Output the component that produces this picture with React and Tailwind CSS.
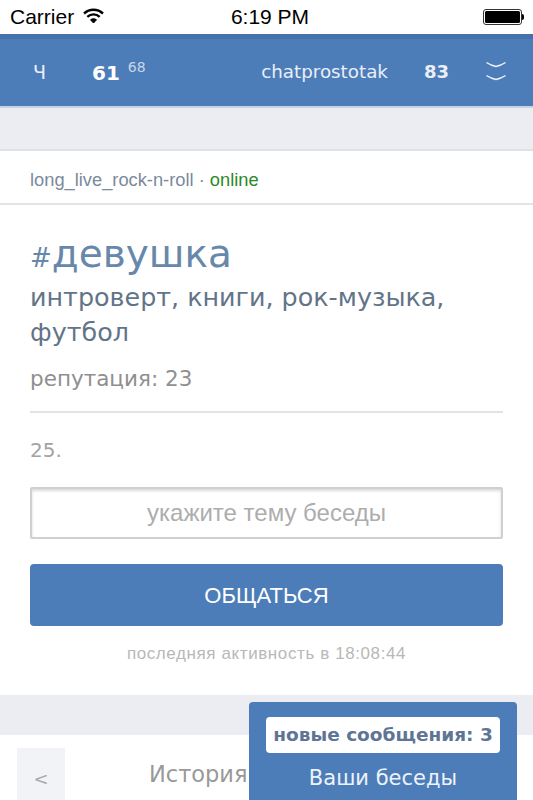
const dejavu = "font-['DejaVu_Sans',sans-serif]";
const arial = "font-['Liberation_Sans',sans-serif]";

function StatusBar() {
  return (
    <div className={`flex h-[34px] items-center justify-between pl-[10px] pr-[9px] bg-white text-black ${arial}`}>
      <div className="flex w-[203px] items-center gap-[9px] text-[21px]">
        <span>Carrier</span>
        <svg width="21" height="16" viewBox="0 0 21 16" fill="none" className="-mt-[2px]">
          <path d="M1 5.5C6.5 0.5 14.5 0.5 20 5.5" stroke="#000" strokeWidth="2.4" />
          <path d="M4.3 8.8C7.8 5.6 13.2 5.6 16.7 8.8" stroke="#000" strokeWidth="2.4" />
          <path d="M7.5 11.8C9.2 10.4 11.8 10.4 13.5 11.8L10.5 15Z" fill="#000" stroke="#000" />
        </svg>
      </div>
      <span className="text-[21px] font-medium">6:19 PM</span>
      <div className="flex w-[197px] justify-end items-center">
        <div className="h-[16px] w-[39px] rounded-[3px] border border-[#333] bg-white p-[1px]">
          <div className="h-full w-full rounded-[1.5px] bg-black" />
        </div>
        <div className="h-[6px] w-[2px] bg-black rounded-r-sm" />
      </div>
    </div>
  );
}

function Header() {
  return (
    <div className={`flex h-[74px] items-center border-t-[5px] border-[#4672ab] border-b-2 border-b-[#c6d3e5] bg-[#4d7db9] text-[#e9eff7] ${dejavu}`}>
      <span className="ml-[33px] w-[59px] text-[19px]">Ч</span>
      <span className="text-[20px] font-bold text-white">61</span>
      <span className="ml-[8px] -mt-[10px] text-[14px] text-[#c7d6e9]">68</span>
      <span className="ml-auto -mt-[2px] text-[18.3px]">chatprostotak</span>
      <span className="ml-[36px] -mt-[2px] text-[18px] font-bold">83</span>
      <svg width="20" height="22" viewBox="0 0 20 22" fill="none" stroke="#f2f5fa" strokeWidth="1.4" className="ml-[37px] mr-[27px] -mt-[2px]">
        <path d="M0.5 1.5Q5 4.5 10 5.5Q15 4.5 19.5 1.5" />
        <path d="M0.5 14.5Q5 17.5 10 18.5Q15 17.5 19.5 14.5" />
      </svg>
    </div>
  );
}

function Card() {
  return (
    <div className="border-t-2 border-[#dfe1e6] bg-white">
      <div className={`flex h-[54px] items-center border-b-2 border-[#e3e4e6] pl-[30px] pt-[5px] text-[18.3px] text-[#7b8a9c] ${arial}`}>
        long_live_rock-n-roll ·&nbsp;<span className="text-[#2a8a2a]">online</span>
      </div>
      <div className={`px-[30px] pt-[25px] ${dejavu}`}>
        <div className="text-[39px] leading-[48px] text-[#6787ab]">
          <span className="text-[26px] leading-none">#</span>девушка
        </div>
        <div className="mt-[2px] text-[25.4px] leading-[35px] text-[#627488]">интроверт, книги, рок-музыка, футбол</div>
        <div className="mt-[15px] text-[21.5px] leading-[28px] text-[#8f8f8f]">репутация: 23</div>
        <div className="mt-[18px] h-[2px] bg-[#e3e3e3]" />
        <div className="mt-[24px] text-[20px] leading-[26px] text-[#a3a3a3]">25.</div>
        <div className={`mt-[24px] flex h-[52px] items-center justify-center rounded-[2px] border-2 border-[#d0d0d0] shadow-[inset_0_2px_3px_rgba(0,0,0,0.15)] text-[24px] text-[#adadad] ${arial}`}>
          укажите тему беседы
        </div>
        <button className={`mt-[25px] flex h-[62px] w-full items-center justify-center rounded-[4px] bg-[#4d7db9] text-[22px] text-white ${arial}`}>
          ОБЩАТЬСЯ
        </button>
        <div className={`mt-[17px] pb-[30px] text-center text-[17px] leading-[22px] tracking-[0.6px] text-[#b8b8b8] ${arial}`}>
          последняя активность в 18:08:44
        </div>
      </div>
    </div>
  );
}

function Footer() {
  return (
    <div className={`flex h-[65px] items-start bg-white pl-[17px] pt-[13px] ${dejavu}`}>
      <div className="flex h-[52px] w-[48px] items-center justify-center bg-[#f2f3f6] pt-[8px] text-[18px] text-[#aaa]">&lt;</div>
      <span className="ml-[84px] mt-[10px] text-[22.5px] text-[#999]">История</span>
    </div>
  );
}

export default function App() {
  return (
    <div className="relative h-[800px] w-[533px] overflow-hidden bg-[#ecedf3]">
      <StatusBar />
      <Header />
      <div className="h-[41px]" />
      <Card />
      <div className="h-[40px]" />
      <Footer />
      <div className={`absolute left-[249px] top-[702px] h-[98px] w-[268px] rounded-t-[4px] bg-[#4d7db9] px-[17px] pt-[15px] text-center ${dejavu}`}>
        <div className="flex h-[36px] items-center justify-center rounded-[4px] bg-white text-[18.5px] font-bold text-[#5f7595]">новые сообщения: 3</div>
        <div className="mt-[10px] text-[21px] text-[#eef3f9]">Ваши беседы</div>
      </div>
    </div>
  );
}
